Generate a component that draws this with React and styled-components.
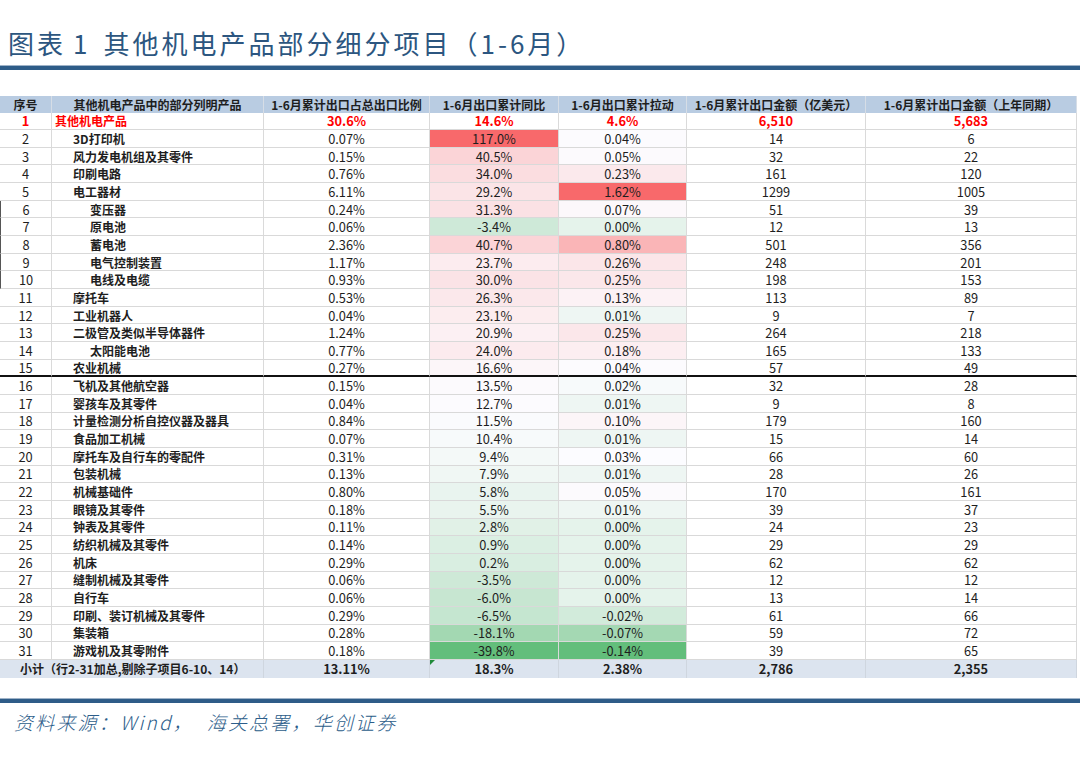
import React from "react";
import styled, { createGlobalStyle } from "styled-components";

const GlobalStyle = createGlobalStyle`
  html, body {
    margin: 0;
    padding: 0;
    background: #ffffff;
  }
  body {
    width: 1080px;
    height: 765px;
    overflow: hidden;
    font-family: "Noto Sans CJK SC", "Noto Sans", sans-serif;
  }
`;

const COLS = "52px 212px 166px 129px 128px 179px 211px";
const ROW_H = "17.67px";

const Page = styled.div`
  width: 1080px;
  height: 765px;
  display: flex;
  flex-direction: column;
`;

const Title = styled.h1`
  margin: 28px 0 0 8px;
  font-size: 26px;
  line-height: 30px;
  font-weight: 400;
  letter-spacing: 3px;
  color: #2c5680;
  white-space: pre;
`;

const Gap = styled.span`
  display: inline-block;
  width: ${(p) => p.$w}px;
`;

const Rule = styled.div`
  margin-top: ${(p) => p.$top}px;
  height: ${(p) => p.$h}px;
  background: #2e5c88;
  border-top: 1px solid #9fb3c8;
`;

const Table = styled.div`
  margin-top: 26px;
  width: 1077px;
  display: grid;
  grid-template-columns: ${COLS};
`;

const Row = styled.div`
  display: contents;
`;

const HeadCell = styled.div`
  height: 16.5px;
  background: #b9cce2;
  border-right: 1px solid #d6dde6;
  font-size: 12px;
  font-weight: 700;
  color: #1e1e1e;
  display: flex;
  align-items: center;
  justify-content: center;
  white-space: nowrap;
  overflow: hidden;
`;

const Cell = styled.div`
  position: relative;
  height: ${ROW_H};
  box-sizing: border-box;
  background: ${(p) => p.$bg || "#ffffff"};
  border-right: 1px solid #dadada;
  border-bottom: ${(p) => (p.$thick ? "2px solid #111" : "1.5px solid #d9d9d9")};
  border-left: ${(p) => (p.$mark ? "1.5px solid #555" : "none")};
  font-size: ${(p) => (p.$left ? 12 : 12.8)}px;
  font-weight: ${(p) => (p.$bold ? 700 : 400)};
  color: ${(p) => (p.$red ? "#ff0000" : "#1e1e1e")};
  display: flex;
  align-items: center;
  justify-content: ${(p) => (p.$left ? "flex-start" : "center")};
  padding-left: ${(p) => p.$indent || 0}px;
  white-space: nowrap;
  overflow: visible;
`;

const TotalCell = styled(Cell)`
  background: #dce4ef;
  font-weight: 700;
  border-bottom: none;
  border-right: 1px solid #cfd6df;
`;

const ErrorTick = styled.span`
  position: absolute;
  left: 0;
  top: 0;
  width: 0;
  height: 0;
  border-top: 5px solid #1f8a3a;
  border-right: 5px solid transparent;
`;

const Footer = styled.div`
  margin: 6px 0 0 14px;
  font-size: 19px;
  line-height: 26px;
  font-style: italic;
  font-weight: 300;
  letter-spacing: 2.2px;
  color: #2c5d8a;
  white-space: pre;
`;

const rows = [
  [2, "3D打印机", 1, "0.07%", 117.0, 0.04, "14", "6"],
  [3, "风力发电机组及其零件", 1, "0.15%", 40.5, 0.05, "32", "22"],
  [4, "印刷电路", 1, "0.76%", 34.0, 0.23, "161", "120"],
  [5, "电工器材", 1, "6.11%", 29.2, 1.62, "1299", "1005"],
  [6, "变压器", 2, "0.24%", 31.3, 0.07, "51", "39"],
  [7, "原电池", 2, "0.06%", -3.4, 0.0, "12", "13"],
  [8, "蓄电池", 2, "2.36%", 40.7, 0.8, "501", "356"],
  [9, "电气控制装置", 2, "1.17%", 23.7, 0.26, "248", "201"],
  [10, "电线及电缆", 2, "0.93%", 30.0, 0.25, "198", "153"],
  [11, "摩托车", 1, "0.53%", 26.3, 0.13, "113", "89"],
  [12, "工业机器人", 1, "0.04%", 23.1, 0.01, "9", "7"],
  [13, "二极管及类似半导体器件", 1, "1.24%", 20.9, 0.25, "264", "218"],
  [14, "太阳能电池", 2, "0.77%", 24.0, 0.18, "165", "133"],
  [15, "农业机械", 1, "0.27%", 16.6, 0.04, "57", "49"],
  [16, "飞机及其他航空器", 1, "0.15%", 13.5, 0.02, "32", "28"],
  [17, "婴孩车及其零件", 1, "0.04%", 12.7, 0.01, "9", "8"],
  [18, "计量检测分析自控仪器及器具", 1, "0.84%", 11.5, 0.1, "179", "160"],
  [19, "食品加工机械", 1, "0.07%", 10.4, 0.01, "15", "14"],
  [20, "摩托车及自行车的零配件", 1, "0.31%", 9.4, 0.03, "66", "60"],
  [21, "包装机械", 1, "0.13%", 7.9, 0.01, "28", "26"],
  [22, "机械基础件", 1, "0.80%", 5.8, 0.05, "170", "161"],
  [23, "眼镜及其零件", 1, "0.18%", 5.5, 0.01, "39", "37"],
  [24, "钟表及其零件", 1, "0.11%", 2.8, 0.0, "24", "23"],
  [25, "纺织机械及其零件", 1, "0.14%", 0.9, 0.0, "29", "29"],
  [26, "机床", 1, "0.29%", 0.2, 0.0, "62", "62"],
  [27, "缝制机械及其零件", 1, "0.06%", -3.5, 0.0, "12", "12"],
  [28, "自行车", 1, "0.06%", -6.0, 0.0, "13", "14"],
  [29, "印刷、装订机械及其零件", 1, "0.29%", -6.5, -0.02, "61", "66"],
  [30, "集装箱", 1, "0.28%", -18.1, -0.07, "59", "72"],
  [31, "游戏机及其零附件", 1, "0.18%", -39.8, -0.14, "39", "65"],
];

const GREEN = [99, 190, 123];
const WHITE = [252, 252, 255];
const RED = [248, 105, 107];

const median = (arr) => {
  const s = [...arr].sort((a, b) => a - b);
  const m = s.length / 2;
  return s.length % 2 ? s[Math.floor(m)] : (s[m - 1] + s[m]) / 2;
};

const mix = (a, b, t) =>
  `rgb(${a.map((v, i) => Math.round(v + (b[i] - v) * t)).join(",")})`;

const makeScale = (values) => {
  const min = Math.min(...values);
  const max = Math.max(...values);
  const mid = median(values);
  return (v) =>
    v >= mid
      ? mix(WHITE, RED, (v - mid) / (max - mid))
      : mix(WHITE, GREEN, (mid - v) / (mid - min));
};

const yoyColor = makeScale(rows.map((r) => r[4]));
const pullColor = makeScale(rows.map((r) => r[5]));

const headers = [
  "序号",
  "其他机电产品中的部分列明产品",
  "1-6月累计出口占总出口比例",
  "1-6月出口累计同比",
  "1-6月出口累计拉动",
  "1-6月累计出口金额（亿美元）",
  "1-6月累计出口金额（上年同期）",
];

const App = () => {
  return (
    <Page>
      <GlobalStyle />
      <Title>
        图表<Gap $w={7} />1<Gap $w={13} />其他机电产品部分细分项目（1-6月）
      </Title>
      <Rule $top={7} $h={4} />
      <Table>
        <Row>
          {headers.map((h) => (
            <HeadCell key={h}>{h}</HeadCell>
          ))}
        </Row>
        <Row>
          <Cell $red $bold>1</Cell>
          <Cell $red $bold $left $indent={3}>其他机电产品</Cell>
          <Cell $red $bold>30.6%</Cell>
          <Cell $red $bold>14.6%</Cell>
          <Cell $red $bold>4.6%</Cell>
          <Cell $red $bold>6,510</Cell>
          <Cell $red $bold>5,683</Cell>
        </Row>
        {rows.map(([no, name, level, ratio, yoy, pull, amt, prev]) => {
          const thick = no === 15;
          const mark = no >= 6 && no <= 10;
          return (
            <Row key={no}>
              <Cell $thick={thick} $mark={mark}>{no}</Cell>
              <Cell $thick={thick} $bold $left $indent={level === 2 ? 38 : 21}>
                {name}
              </Cell>
              <Cell $thick={thick}>{ratio}</Cell>
              <Cell $thick={thick} $bg={yoyColor(yoy)}>
                {yoy.toFixed(1)}%
              </Cell>
              <Cell $thick={thick} $bg={pullColor(pull)}>
                {pull.toFixed(2)}%
              </Cell>
              <Cell $thick={thick}>{amt}</Cell>
              <Cell $thick={thick}>{prev}</Cell>
            </Row>
          );
        })}
        <Row>
          <TotalCell $left $indent={20} style={{ gridColumn: "span 2" }}>
            小计（行2-31加总,剔除子项目6-10、14）
          </TotalCell>
          <TotalCell>13.11%</TotalCell>
          <TotalCell>
            <ErrorTick />
            18.3%
          </TotalCell>
          <TotalCell>2.38%</TotalCell>
          <TotalCell>2,786</TotalCell>
          <TotalCell>2,355</TotalCell>
        </Row>
      </Table>
      <Rule $top={20} $h={4} />
      <Footer>{"资料来源：Wind，  海关总署，华创证券"}</Footer>
    </Page>
  );
};

export default App;
